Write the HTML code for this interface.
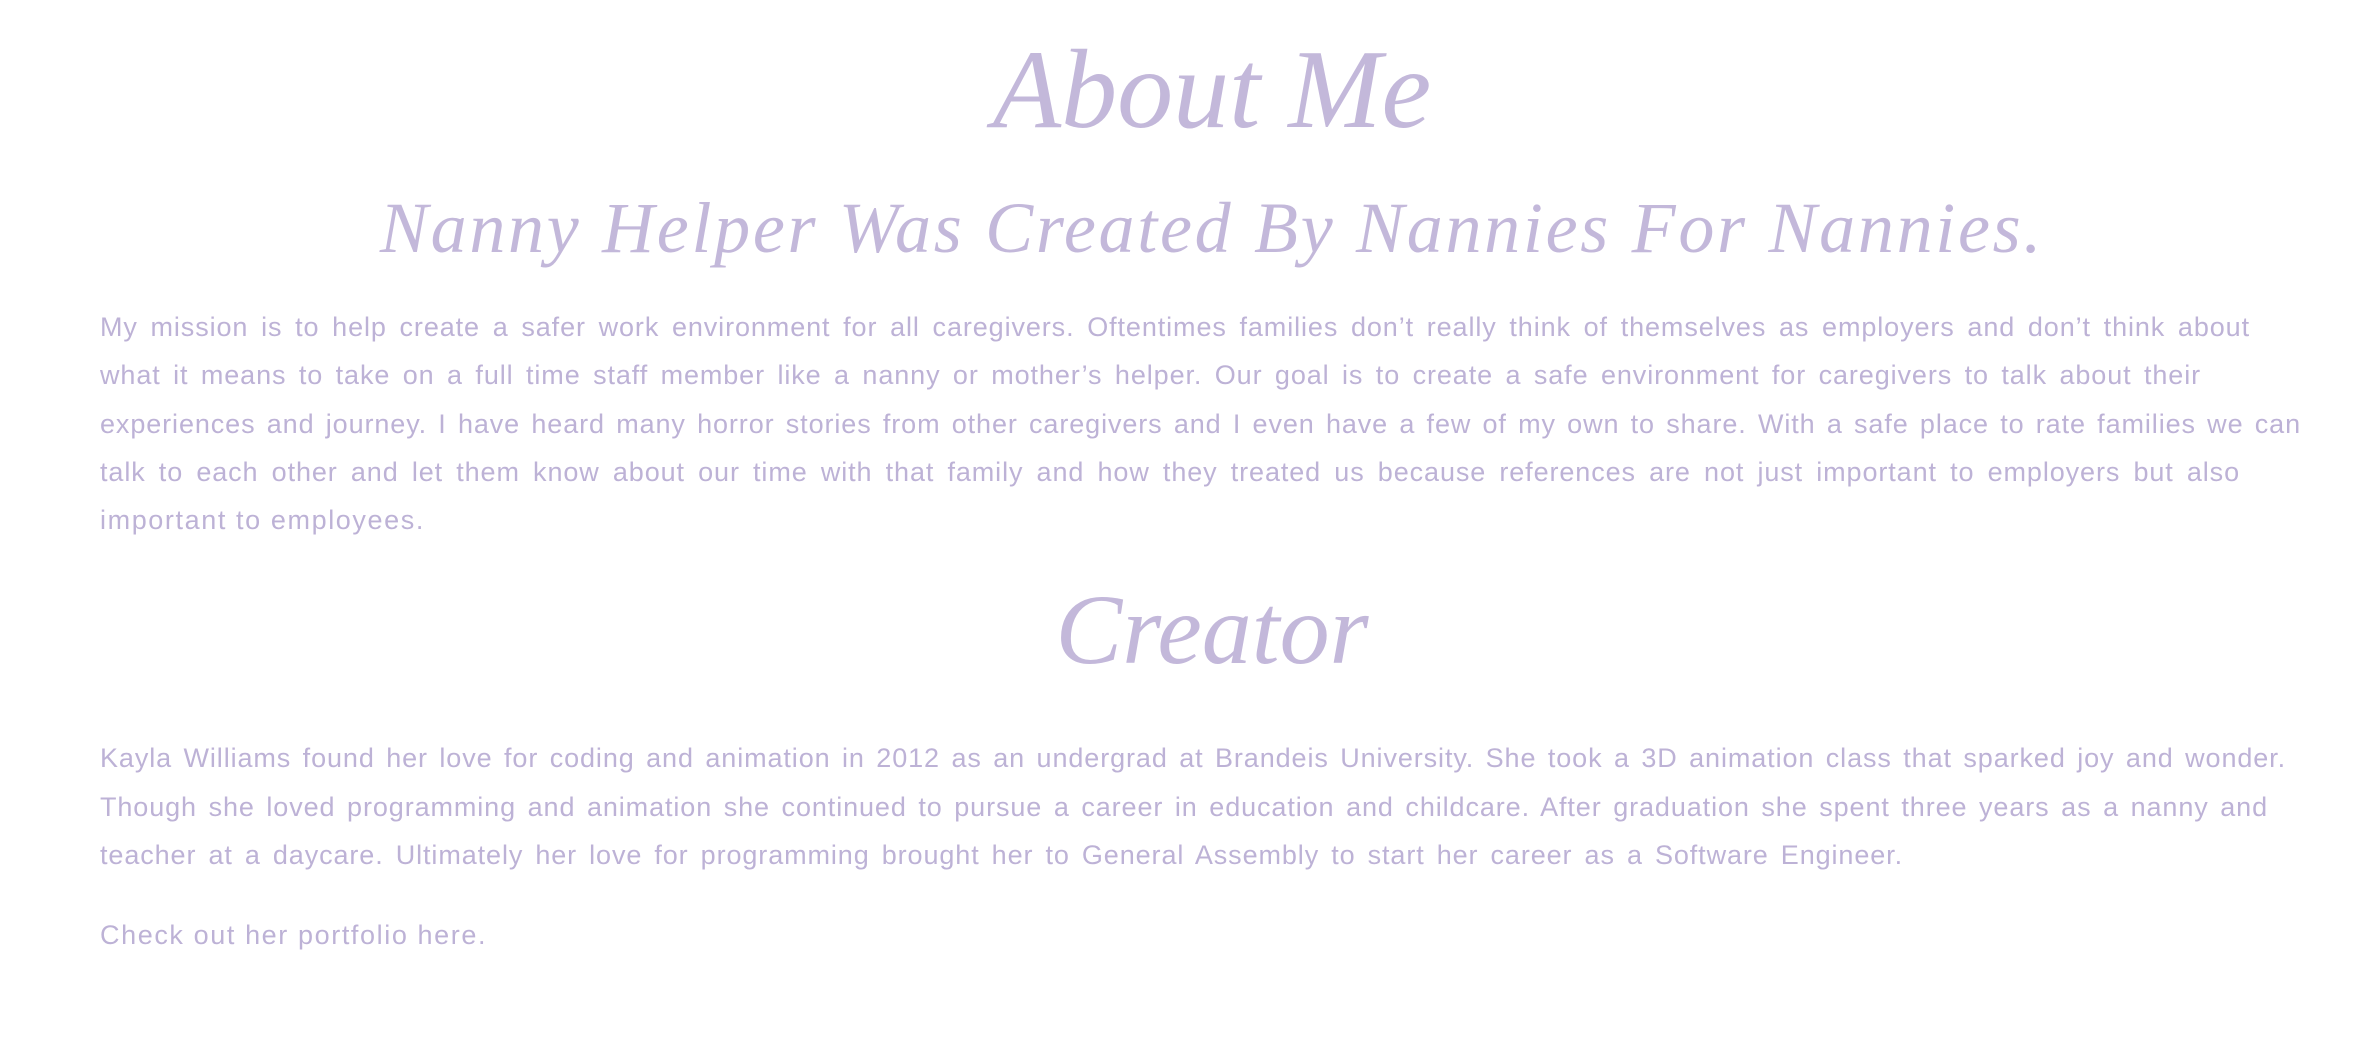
<!DOCTYPE html>
<html><head><meta charset="utf-8"><style>
body{margin:0;width:2364px;height:1056px;background:#fff;position:relative;overflow:hidden;font-family:"Liberation Sans",sans-serif;color:#bdb2d6}
.h{position:absolute;left:0;width:2304px;padding-left:60px;text-align:center;font-family:"Liberation Serif",serif;font-style:italic;color:#c3b8da;white-space:nowrap;line-height:1}
.l{position:absolute;left:100px;font-size:27px;letter-spacing:0.9px;line-height:30px;white-space:nowrap;text-align:justify;text-align-last:justify}
.n{text-align-last:left;width:auto!important;letter-spacing:1.6px}
</style></head><body>
<div class="h" style="top:34px;font-size:112px;">About Me</div>
<div class="h" style="top:192px;font-size:72px;letter-spacing:2.7px">Nanny Helper Was Created By Nannies For Nannies.</div>
<div class="l" style="top:312px;width:2150px">My mission is to help create a safer work environment for all caregivers. Oftentimes families don’t really think of themselves as employers and don’t think about</div>
<div class="l" style="top:360px;width:2101px">what it means to take on a full time staff member like a nanny or mother’s helper. Our goal is to create a safe environment for caregivers to talk about their</div>
<div class="l" style="top:409px;width:2201px">experiences and journey. I have heard many horror stories from other caregivers and I even have a few of my own to share. With a safe place to rate families we can</div>
<div class="l" style="top:457px;width:2140px">talk to each other and let them know about our time with that family and how they treated us because references are not just important to employers but also</div>
<div class="l n" style="top:505px">important to employees.</div>
<div class="h" style="top:580px;font-size:100px;">Creator</div>
<div class="l" style="top:743px;width:2186px">Kayla Williams found her love for coding and animation in 2012 as an undergrad at Brandeis University. She took a 3D animation class that sparked joy and wonder.</div>
<div class="l" style="top:792px;width:2168px">Though she loved programming and animation she continued to pursue a career in education and childcare. After graduation she spent three years as a nanny and</div>
<div class="l" style="top:840px;width:1803px">teacher at a daycare. Ultimately her love for programming brought her to General Assembly to start her career as a Software Engineer.</div>
<div class="l n" style="top:920px">Check out her portfolio here.</div>
</body></html>
